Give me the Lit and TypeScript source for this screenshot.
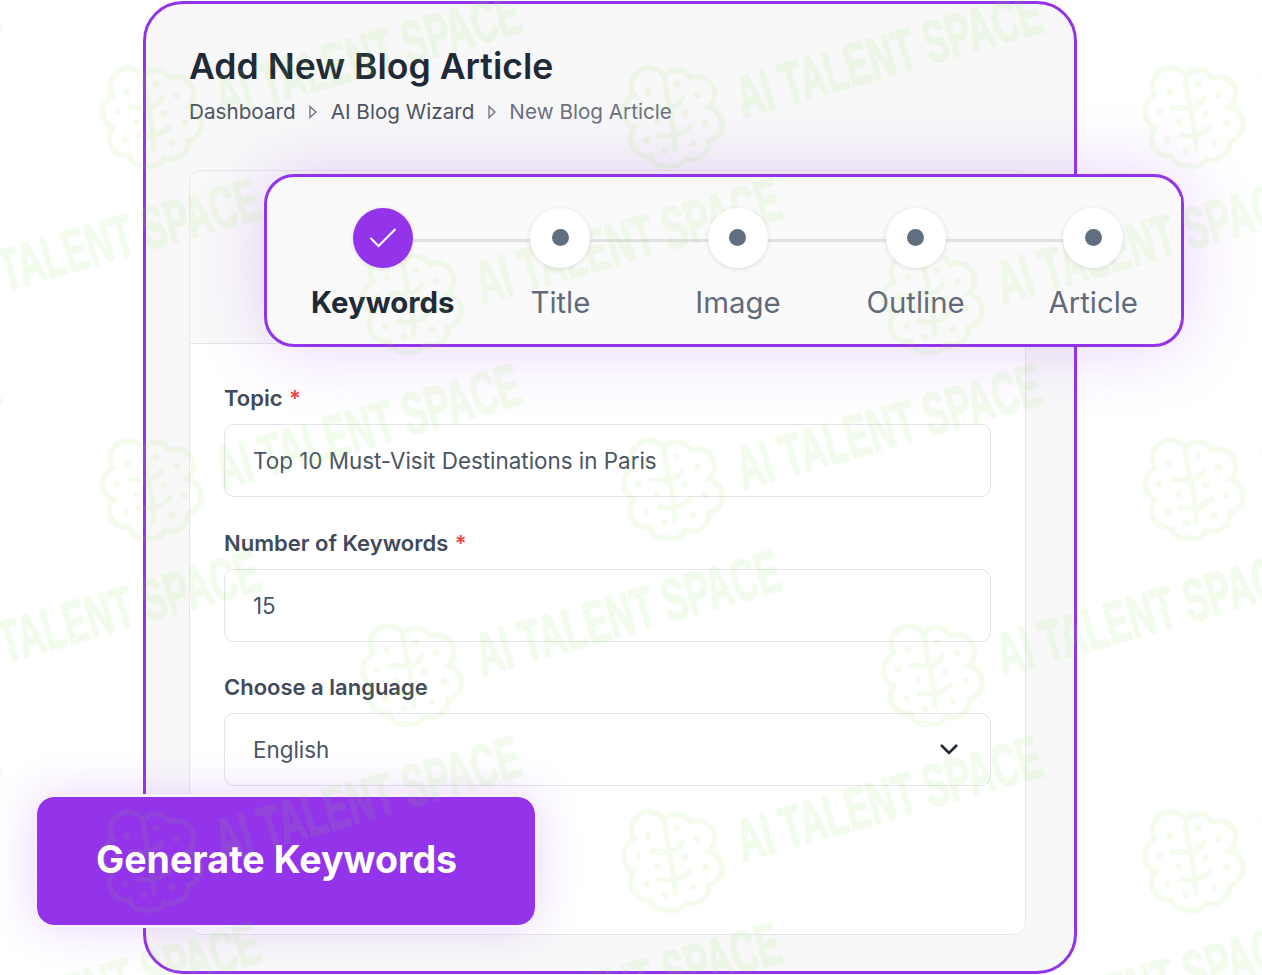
import { LitElement, html, css, svg } from "lit";
import { customElement } from "lit/decorators.js";

const STEPS = ["Keywords", "Title", "Image", "Outline", "Article"];
const TILE_W = 521;
const TILE_H = 186;

const watermarkMarks = () => {
  const marks = [];
  for (let row = 0; row <= 5; row++) {
    const shift = row % 2 === 0 ? 0 : 260;
    for (let col = -1; col <= 2; col++) {
      const x = 150 + shift + col * TILE_W;
      const y = 117 + row * TILE_H;
      marks.push(svg`<g transform="translate(${x} ${y})">
        <g transform="scale(0.97)">
          <path class="wm-line" d="M-7 -42A16 16 0 0 1 20 -40A18 18 0 0 1 39 -10A18 18 0 0 1 39 25A18 18 0 0 1 15 43A14 14 0 0 1 -3 50A14 14 0 0 1 -21 40A18 18 0 0 1 -38 11A18 18 0 0 1 -38 -22A18 18 0 0 1 -7 -42Z M-7 -42C-6 -25 -2 -15 2 10C3 18 4 26 4 33 M-20 -10L-4 -9C5 -10 9 -14 12 -19 M-12 19L0 20C8 20 15 14 20 10"/>
          <g class="wm-fill">
            <circle cx="-23.7" cy="-26" r="3.6"/><circle cx="6" cy="-33.7" r="3.6"/><circle cx="27" cy="-23" r="3.6"/>
            <circle cx="-34" cy="-5.3" r="3.6"/><circle cx="-14" cy="5.3" r="3.6"/><circle cx="14.3" cy="-3.7" r="3.6"/>
            <circle cx="35.3" cy="6.3" r="3.6"/><circle cx="-25.3" cy="24" r="3.6"/><circle cx="-6.3" cy="34.7" r="3.6"/>
            <circle cx="22.7" cy="27" r="3.6"/>
          </g>
        </g>
        <text class="wm-text" transform="translate(72 1) rotate(-16)" textLength="315" lengthAdjust="spacingAndGlyphs">AI TALENT SPACE</text>
      </g>`);
    }
  }
  return marks;
};

@customElement("app-root")
export class AppRoot extends LitElement {
  static styles = css`
    :host {
      display: block;
      position: relative;
      width: 1262px;
      height: 975px;
      overflow: hidden;
      background: #fff;
      font-family: Inter, "Liberation Sans", sans-serif;
    }
    .frame {
      box-sizing: border-box;
      width: 934px;
      height: 973px;
      margin: 1px 0 0 143px;
      padding: 42px 48px 36px 43px;
      border: 3px solid #9333ea;
      border-radius: 40px;
      background: #f8f8f8;
      display: flex;
      flex-direction: column;
    }
    h1 {
      margin: 0;
      font-size: 35.6px;
      line-height: 42px;
      font-weight: 600;
      color: #1f2937;
    }
    .crumbs {
      display: flex;
      align-items: center;
      gap: 13.5px;
      margin-top: 9px;
      font-size: 20.7px;
      line-height: 30px;
      color: #4b5563;
    }
    .crumbs .current {
      color: #6b7280;
    }
    .crumbs svg {
      display: block;
      fill: none;
      stroke: #6b7280;
      stroke-width: 1.3;
    }
    .card {
      flex: 1;
      margin-top: 43px;
      border: 1px solid #e7e7e7;
      border-radius: 12px;
      background: #fff;
      display: flex;
      flex-direction: column;
    }
    .card-head {
      height: 172px;
      border-bottom: 1px solid #e7e7e7;
      border-radius: 12px 12px 0 0;
      background: #f9f9f9;
    }
    .form {
      display: flex;
      flex-direction: column;
      gap: 32px;
      padding: 40px 34px 0;
    }
    .form > :last-child {
      margin-top: -1px;
    }
    .label {
      font-size: 22px;
      line-height: 28px;
      font-weight: 560;
      color: #3f4a5a;
      margin-bottom: 12px;
    }
    .req {
      color: #ef4444;
      margin-left: 1px;
    }
    .control {
      box-sizing: border-box;
      height: 73px;
      padding: 0 28px;
      border: 1px solid #e2e4e7;
      border-radius: 10px;
      display: flex;
      align-items: center;
      justify-content: space-between;
      font-size: 22.4px;
      color: #4b5563;
      background: #fff;
    }
    .control svg {
      display: block;
      margin: 0 3px 1px 0;
      fill: none;
      stroke: #1f2937;
      stroke-width: 2.6;
    }
    .stepper {
      position: absolute;
      box-sizing: border-box;
      left: 264px;
      top: 174px;
      width: 920px;
      height: 173px;
      padding: 20px 0 0 27px;
      border: 3px solid #9333ea;
      border-radius: 30px;
      background: #f9f9f9;
      box-shadow: 0 0 70px rgba(147, 51, 234, 0.22);
    }
    .steps {
      display: grid;
      grid-template-columns: repeat(5, 177.6px);
      padding-top: 11px;
      background: #fafafa;
    }
    .step {
      position: relative;
      display: flex;
      flex-direction: column;
      align-items: center;
      gap: 17px;
    }
    .step:not(:last-child)::after {
      content: "";
      position: absolute;
      left: 50%;
      width: 100%;
      top: 31px;
      height: 3px;
      background: #e2e2e2;
    }
    .bubble {
      position: relative;
      z-index: 1;
      box-sizing: border-box;
      width: 60px;
      height: 60px;
      border-radius: 50%;
      background: #fff;
      box-shadow: 0 1px 5px rgba(0, 0, 0, 0.12);
      display: flex;
      align-items: center;
      justify-content: center;
    }
    .dot {
      width: 17px;
      height: 17px;
      margin-bottom: 1px;
      border-radius: 50%;
      background: #5f6f80;
    }
    .step.done .bubble {
      background: #9333ea;
    }
    .bubble svg {
      display: block;
      fill: none;
      stroke: #fff;
      stroke-width: 2;
    }
    .step-name {
      font-size: 29.4px;
      line-height: 35px;
      color: #5f6b7a;
      white-space: nowrap;
    }
    .step.done .step-name {
      font-weight: 700;
      color: #1f2937;
    }
    .generate {
      position: absolute;
      box-sizing: border-box;
      left: 34px;
      top: 794px;
      width: 504px;
      height: 134px;
      padding: 0 0 4px 59px;
      border: 3px solid #f6f0fd;
      border-radius: 20px;
      background: #9333ea;
      background-clip: padding-box;
      box-shadow: 0 0 45px rgba(147, 51, 234, 0.2);
      color: #fff;
      font-size: 37.6px;
      font-weight: 700;
      display: flex;
      align-items: center;
    }
    .watermark {
      position: absolute;
      inset: 0;
      width: 1262px;
      height: 975px;
      pointer-events: none;
    }
    .wm-line {
      fill: none;
      stroke: rgb(140, 230, 80);
      stroke-opacity: 0.1;
      stroke-width: 5.5;
      stroke-linecap: round;
    }
    .wm-fill {
      fill: rgb(140, 230, 80);
      fill-opacity: 0.1;
    }
    .wm-text {
      fill: rgb(140, 230, 80);
      stroke: rgb(140, 230, 80);
      stroke-width: 1.5;
      opacity: 0.1;
      font-family: "Liberation Sans", sans-serif;
      font-weight: 700;
      font-size: 60px;
    }
  `;

  render() {
    const caret = html`<svg width="8" height="14" viewBox="0 0 8 14"><path d="M1 1.5L7 7L1 12.5Z" /></svg>`;
    return html`
      <div class="frame">
        <h1>Add New Blog Article</h1>
        <div class="crumbs">
          <span>Dashboard</span>${caret}<span>AI Blog Wizard</span>${caret}<span class="current">New Blog Article</span>
        </div>
        <div class="card">
          <div class="card-head"></div>
          <div class="form">
            <div>
              <div class="label">Topic <span class="req">*</span></div>
              <div class="control">Top 10 Must-Visit Destinations in Paris</div>
            </div>
            <div>
              <div class="label">Number of Keywords <span class="req">*</span></div>
              <div class="control">15</div>
            </div>
            <div>
              <div class="label">Choose a language</div>
              <div class="control">
                English
                <svg width="20" height="12" viewBox="0 0 20 12"><path d="M2 2L10 10L18 2" /></svg>
              </div>
            </div>
          </div>
        </div>
      </div>
      <div class="stepper">
        <div class="steps">
          ${STEPS.map(
            (name, i) => html`
              <div class="step ${i === 0 ? "done" : ""}">
                <div class="bubble">
                  ${i === 0
                    ? html`<svg width="28" height="22" viewBox="0 0 28 22"><path d="M1.5 11L9.5 19L26.5 2" /></svg>`
                    : html`<div class="dot"></div>`}
                </div>
                <div class="step-name">${name}</div>
              </div>
            `
          )}
        </div>
      </div>
      <div class="generate">Generate Keywords</div>
      <svg class="watermark" viewBox="0 0 1262 975" aria-hidden="true">${watermarkMarks()}</svg>
    `;
  }
}
